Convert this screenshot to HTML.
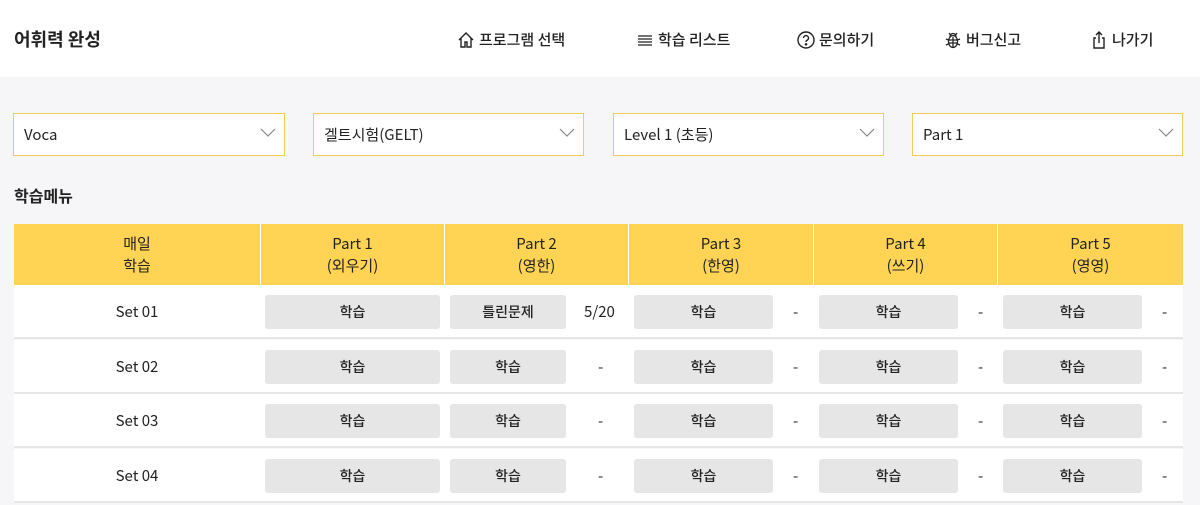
<!DOCTYPE html>
<html><head><meta charset="utf-8"><style>
*{box-sizing:border-box;margin:0;padding:0}
body{width:1200px;height:505px;overflow:hidden;background:#f6f6f8;font-family:"Noto Sans CJK KR","Liberation Sans",sans-serif;color:#222;position:relative}
.hdr{position:absolute;left:0;top:0;width:1200px;height:77px;background:#fff}
.title{position:absolute;left:14px;top:26px;font-size:18px;font-weight:700;line-height:26px}
.nav{position:absolute;top:29px;font-size:15px;line-height:22px;display:flex;align-items:center;gap:4px;color:#222;font-weight:500}
.nav svg{width:18px;height:18px}
.sel{position:absolute;top:113px;height:43px;background:#fff;border:1px solid #f3cc55;font-size:15px;line-height:42px;padding-left:10px}
.sel svg{position:absolute;right:8px;top:14px}
.sub{position:absolute;left:14px;top:183px;font-size:16px;font-weight:700}
.th{position:absolute;top:224px;height:61px;background:#ffd454;text-align:center;font-size:15px;line-height:22px;padding-top:9px;border-right:1px solid #fff}
.row{position:absolute;left:14px;width:1169px;height:54px;background:#fff;border-bottom:2px solid #e6e6e8}
.c{position:absolute;font-size:15px;line-height:34px;top:10px}
.b{position:absolute;top:10px;height:34px;background:#e6e6e6;border-radius:3px;text-align:center;line-height:34px;font-size:14px;font-weight:500}
</style></head><body>
<div class="hdr"></div>
<div class="title">어휘력 완성</div>
<div class="nav" style="left:457px"><svg viewBox="0 0 18 18" fill="none" stroke="#222" stroke-width="1.4"><path d="M2 9 L9 2 L16 9 M4 7.5 V16 H8 V11 H10 V16 H14 V7.5"/></svg>프로그램 선택</div>
<div class="nav" style="left:636px"><svg viewBox="0 0 18 18" stroke="#222" stroke-width="1.3"><path d="M2 5H16M2 8H16M2 11H16M2 14H16"/></svg>학습 리스트</div>
<div class="nav" style="left:797px"><svg viewBox="0 0 18 18" fill="none" stroke="#222" stroke-width="1.4"><circle cx="9" cy="9" r="8"/><path d="M6.5 7a2.5 2.5 0 1 1 3.3 2.4c-.6.3-.8.8-.8 1.6"/><circle cx="9" cy="13.3" r=".6" fill="#222"/></svg>문의하기</div>
<div class="nav" style="left:944px"><svg viewBox="0 0 18 18" fill="none" stroke="#222" stroke-width="1.3"><ellipse cx="9" cy="10.5" rx="4.5" ry="6"/><path d="M6 5.5a3 3 0 0 1 6 0M9 6v10.5M4.5 9H13.5M4.5 12H13.5M2 8l2.5 1M16 8l-2.5 1M2 14l2.5-1M16 14l-2.5-1M5 2l1.5 2M13 2l-1.5 2"/></svg>버그신고</div>
<div class="nav" style="left:1090px"><svg viewBox="0 0 18 18" fill="none" stroke="#222" stroke-width="1.4"><path d="M6 7H4V17H14V7H12M9 12V1M6 4L9 1L12 4"/></svg>나가기</div>

<div class="sel" style="left:13px;width:272px">Voca<svg width="16" height="10" viewBox="0 0 16 10" fill="none" stroke="#888" stroke-width="1.2"><path d="M1 1L8 8L15 1"/></svg></div>
<div class="sel" style="left:313px;width:271px">겔트시험(GELT)<svg width="16" height="10" viewBox="0 0 16 10" fill="none" stroke="#888" stroke-width="1.2"><path d="M1 1L8 8L15 1"/></svg></div>
<div class="sel" style="left:613px;width:271px">Level 1 (초등)<svg width="16" height="10" viewBox="0 0 16 10" fill="none" stroke="#888" stroke-width="1.2"><path d="M1 1L8 8L15 1"/></svg></div>
<div class="sel" style="left:912px;width:271px">Part 1<svg width="16" height="10" viewBox="0 0 16 10" fill="none" stroke="#888" stroke-width="1.2"><path d="M1 1L8 8L15 1"/></svg></div>

<div class="sub">학습메뉴</div>

<div class="th" style="left:14px;width:247px">매일<br>학습</div>
<div class="th" style="left:261px;width:184px">Part 1<br>(외우기)</div>
<div class="th" style="left:445px;width:184px">Part 2<br>(영한)</div>
<div class="th" style="left:629px;width:185px">Part 3<br>(한영)</div>
<div class="th" style="left:814px;width:184px">Part 4<br>(쓰기)</div>
<div class="th" style="left:998px;width:185px;border-right:0">Part 5<br>(영영)</div>

<div class="row" style="top:285px"><div class="c" style="left:0;width:246px;text-align:center">Set 01</div><div class="b" style="left:251px;width:175px">학습</div><div class="b" style="left:436px;width:116px">틀린문제</div><div class="c" style="left:570px">5/20</div><div class="b" style="left:620px;width:139px">학습</div><div class="c" style="left:779px">-</div><div class="b" style="left:805px;width:139px">학습</div><div class="c" style="left:964px">-</div><div class="b" style="left:989px;width:139px">학습</div><div class="c" style="left:1148px">-</div></div>
<div class="row" style="top:340px"><div class="c" style="left:0;width:246px;text-align:center">Set 02</div><div class="b" style="left:251px;width:175px">학습</div><div class="b" style="left:436px;width:116px">학습</div><div class="c" style="left:584px">-</div><div class="b" style="left:620px;width:139px">학습</div><div class="c" style="left:779px">-</div><div class="b" style="left:805px;width:139px">학습</div><div class="c" style="left:964px">-</div><div class="b" style="left:989px;width:139px">학습</div><div class="c" style="left:1148px">-</div></div>
<div class="row" style="top:394px"><div class="c" style="left:0;width:246px;text-align:center">Set 03</div><div class="b" style="left:251px;width:175px">학습</div><div class="b" style="left:436px;width:116px">학습</div><div class="c" style="left:584px">-</div><div class="b" style="left:620px;width:139px">학습</div><div class="c" style="left:779px">-</div><div class="b" style="left:805px;width:139px">학습</div><div class="c" style="left:964px">-</div><div class="b" style="left:989px;width:139px">학습</div><div class="c" style="left:1148px">-</div></div>
<div class="row" style="top:449px"><div class="c" style="left:0;width:246px;text-align:center">Set 04</div><div class="b" style="left:251px;width:175px">학습</div><div class="b" style="left:436px;width:116px">학습</div><div class="c" style="left:584px">-</div><div class="b" style="left:620px;width:139px">학습</div><div class="c" style="left:779px">-</div><div class="b" style="left:805px;width:139px">학습</div><div class="c" style="left:964px">-</div><div class="b" style="left:989px;width:139px">학습</div><div class="c" style="left:1148px">-</div></div>
</body></html>
